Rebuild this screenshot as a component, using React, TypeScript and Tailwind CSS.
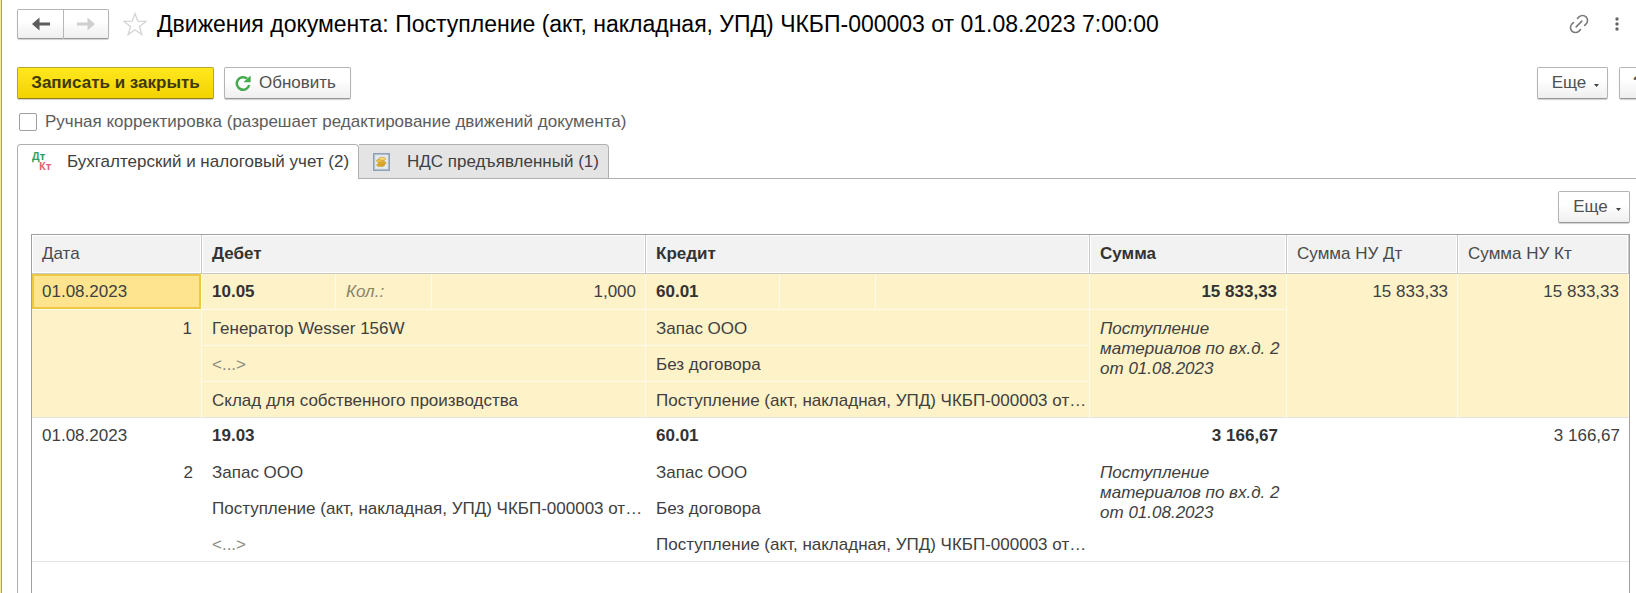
import type { ReactNode } from 'react';
import clsx from 'clsx';
import { Link2 } from 'lucide-react';

type Entry = {
  date: string;
  num: number;
  selected?: boolean;
  debit: string;
  qtyLabel?: string;
  qty?: string;
  debitLines: string[];
  credit: string;
  creditLines: string[];
  sum: string;
  note: string;
  sumDt: string;
  sumKt: string;
};

const RECEIPT = 'Поступление (акт, накладная, УПД) ЧКБП-000003 от…';
const NOTE = 'Поступление материалов по вх.д. 2 от 01.08.2023';

const entries: Entry[] = [
  {
    date: '01.08.2023',
    num: 1,
    selected: true,
    debit: '10.05',
    qtyLabel: 'Кол.:',
    qty: '1,000',
    debitLines: ['Генератор Wesser 156W', '<...>', 'Склад для собственного производства'],
    credit: '60.01',
    creditLines: ['Запас ООО', 'Без договора', RECEIPT],
    sum: '15 833,33',
    note: NOTE,
    sumDt: '15 833,33',
    sumKt: '15 833,33',
  },
  {
    date: '01.08.2023',
    num: 2,
    debit: '19.03',
    debitLines: ['Запас ООО', RECEIPT, '<...>'],
    credit: '60.01',
    creditLines: ['Запас ООО', 'Без договора', RECEIPT],
    sum: '3 166,67',
    note: NOTE,
    sumDt: '',
    sumKt: '3 166,67',
  },
];

const buttonStyle =
  'flex h-8 items-center justify-center rounded-xs border border-[#b4b4b4] border-b-[#989898] bg-linear-to-b from-white from-40% to-[#efefef] text-[#505050] shadow-[0_1px_1px_#d0d0d0]';

function ArrowIcon({ className }: { className?: string }) {
  return (
    <svg viewBox="0 0 18 14" className={clsx('h-[14px] w-[18px]', className)} aria-hidden="true">
      <path d="M0 7 7.5 .5V5.6H18V8.6H7.5V13.5Z" fill="currentColor" />
    </svg>
  );
}

function StarIcon() {
  return (
    <svg viewBox="0 0 24 24" className="size-6" fill="none" stroke="#d4d4d4" strokeWidth="1.3" aria-hidden="true">
      <path d="M12 1.5 14.8 9.2 23 9.4 16.5 14.4 18.8 22.6 12 17.8 5.2 22.6 7.5 14.4 1 9.4 9.2 9.2Z" />
    </svg>
  );
}

function RefreshIcon() {
  return (
    <svg viewBox="0 0 16 16" className="size-4" aria-hidden="true">
      <path d="M12 3.5A6.3 6.3 0 1 0 14.2 10" fill="none" stroke="#43ab4b" strokeWidth="2.5" />
      <path d="M15.6 .4V7.2H8.4Z" fill="#43ab4b" />
    </svg>
  );
}

function PostingIcon() {
  return (
    <svg viewBox="0 0 22 26" className="h-[26px] w-[22px] font-['Open_Sans',sans-serif] font-bold" aria-hidden="true">
      <text x="0" y="11" fontSize="10" fill="#2f9e62">Дт</text>
      <text x="7" y="21" fontSize="10" fill="#e2626a">Кт</text>
    </svg>
  );
}

function RegisterIcon() {
  return (
    <svg viewBox="0 0 17 18" className="h-[18px] w-[17px]" aria-hidden="true">
      <rect x=".75" y=".75" width="15.5" height="16.5" fill="#d5dde4" stroke="#8da1b4" strokeWidth="1.5" />
      <rect x="2.5" y="2.5" width="12" height="13" fill="#e8ebee" />
      <g fill="#e3ae2c" stroke="#b0841d" strokeWidth=".5">
        <ellipse cx="7.6" cy="12" rx="4" ry="1.6" />
        <ellipse cx="9.2" cy="10" rx="4" ry="1.6" />
        <ellipse cx="7.4" cy="7.8" rx="4" ry="1.6" fill="#f0c445" />
        <ellipse cx="9.2" cy="5.8" rx="3.6" ry="1.5" fill="#f8dc78" />
      </g>
    </svg>
  );
}

function MoreButton({ className }: { className?: string }) {
  return (
    <button type="button" className={clsx(buttonStyle, 'gap-2 pl-1.5', className)}>
      Еще
      <svg viewBox="0 0 5 3" className="mt-1 h-[3px] w-[5px]" aria-hidden="true">
        <path d="M0 0H5L2.5 3Z" fill="#404040" />
      </svg>
    </button>
  );
}

function HeadCell({ children, colSpan, bold }: { children: ReactNode; colSpan?: number; bold?: boolean }) {
  return (
    <th
      scope="col"
      colSpan={colSpan}
      className={clsx(
        'h-[39px] border-r border-b border-[#c8c8c8] bg-[#f2f2f2] px-2.5 text-left shadow-[inset_0_0_0_1px_#fff]',
        bold ? 'font-bold text-[#333]' : 'font-normal text-[#4a4a4a]',
      )}
    >
      {children}
    </th>
  );
}

function EntryRows({ entry }: { entry: Entry }) {
  const base = clsx('h-9 truncate border-b pl-2.5', entry.selected && 'border-r border-r-[#fffaeb]');
  const cell = clsx(base, entry.selected ? 'border-b-[#fffaeb]' : 'border-b-white');
  // cells that close the entry get a visible rule below
  const last = clsx(base, 'border-b-[#e3e3e3]');

  return (
    <tbody className={entry.selected ? 'bg-[#fdf2c8]' : 'bg-white'}>
      <tr>
        <td className={clsx(cell, entry.selected && 'bg-[#ffe48f] shadow-[inset_0_0_0_2px_#ecc843]')}>{entry.date}</td>
        <td className={clsx(cell, 'font-bold text-[#333]')}>{entry.debit}</td>
        <td className={clsx(cell, 'text-[#8a8468] italic')}>{entry.qtyLabel}</td>
        <td className={clsx(cell, 'pr-[9px] text-right')}>{entry.qty}</td>
        <td className={clsx(cell, 'font-bold text-[#333]')}>{entry.credit}</td>
        <td className={cell} />
        <td className={cell} />
        <td className={clsx(cell, 'pr-[9px] text-right font-bold text-[#333]')}>{entry.sum}</td>
        <td rowSpan={4} className={clsx(last, 'pt-2 pr-[9px] text-right align-top')}>{entry.sumDt}</td>
        <td rowSpan={4} className={clsx(last, 'pt-2 pr-[9px] text-right align-top')}>{entry.sumKt}</td>
      </tr>
      {entry.debitLines.map((line, i) => {
        const style = clsx(i === 2 ? last : cell, 'pt-0.5');
        return (
          <tr key={i}>
            {i === 0 && (
              <td rowSpan={3} className={clsx(last, 'pt-[9px] pr-[9px] text-right align-top')}>{entry.num}</td>
            )}
            <td colSpan={3} className={clsx(style, line === '<...>' && 'text-[#8a8a80]')}>{line}</td>
            <td colSpan={3} className={style}>{entry.creditLines[i]}</td>
            {i === 0 && (
              <td rowSpan={3} className={clsx(last, 'pt-[9px] pr-1 align-top whitespace-normal italic')}>{entry.note}</td>
            )}
          </tr>
        );
      })}
    </tbody>
  );
}

export default function App() {
  return (
    <div className="flex min-h-screen flex-col overflow-x-hidden border-l border-[#f3eba0] bg-white font-['Liberation_Sans',Arial,sans-serif] text-[17px] leading-5 text-[#404040]">
      <div className="flex flex-1 flex-col border-l border-[#a8a060] pt-[9px] pl-[15px]">
        <header className="flex h-[30px] items-center">
          <div className="flex">
            <button type="button" aria-label="Назад" className={clsx(buttonStyle, 'h-[30px] w-[47px] rounded-r-none')}>
              <ArrowIcon className="text-[#5c5c5c]" />
            </button>
            <button type="button" aria-label="Вперед" className={clsx(buttonStyle, 'h-[30px] w-[45px] rounded-l-none border-l-0')}>
              <ArrowIcon className="rotate-180 text-[#cfcfcf]" />
            </button>
          </div>
          <button type="button" aria-label="В избранное" className="ml-3.5">
            <StarIcon />
          </button>
          <h1 className="ml-2.5 text-[23px] whitespace-nowrap text-black">
            Движения документа: Поступление (акт, накладная, УПД) ЧКБП-000003 от 01.08.2023 7:00:00
          </h1>
          <div className="ml-auto flex items-center gap-6 pr-[17px] text-[#7a7a7a]">
            <button type="button" aria-label="Получить ссылку">
              <Link2 className="size-6 -rotate-45" strokeWidth={1.6} />
            </button>
            <button type="button" aria-label="Меню">
              <svg viewBox="0 0 4 14" className="h-[14px] w-1" fill="#666" aria-hidden="true">
                <circle cx="2" cy="2" r="1.7" />
                <circle cx="2" cy="7" r="1.7" />
                <circle cx="2" cy="12" r="1.7" />
              </svg>
            </button>
          </div>
        </header>

        <div className="mt-7 flex">
          <button
            type="button"
            className="h-8 w-[197px] rounded-xs border border-[#b8a52c] border-b-[#8f7f16] bg-linear-to-b from-[#ffe81c] to-[#f3d200] font-bold text-[#40390c] shadow-[0_1px_1px_#d0d0d0]"
          >
            Записать и закрыть
          </button>
          <button type="button" className={clsx(buttonStyle, 'ml-2.5 w-[127px] gap-2 pr-1')}>
            <RefreshIcon />
            Обновить
          </button>
          <MoreButton className="ml-auto w-[71px]" />
          {/* runs past the right edge of the window */}
          <button type="button" aria-label="Справка" className={clsx(buttonStyle, 'ml-[11px] -mr-[21px] w-[38px] shrink-0 font-bold')}>
            ?
          </button>
        </div>

        <label className="mt-[13px] flex h-5 items-center gap-2 pl-0.5 text-[#5c5c5c]">
          <input type="checkbox" className="size-[18px] appearance-none rounded-xs border border-[#a0a0a0] bg-white checked:bg-[#5c5c5c]" />
          Ручная корректировка (разрешает редактирование движений документа)
        </label>

        <div role="tablist" className="mt-3 flex h-[35px]">
          <button
            type="button"
            role="tab"
            aria-selected="true"
            className="flex w-[342px] items-center gap-[13px] rounded-t-sm border border-b-0 border-[#b0b0b0] bg-white pl-3.5"
          >
            <PostingIcon />
            Бухгалтерский и налоговый учет (2)
          </button>
          <button
            type="button"
            role="tab"
            aria-selected="false"
            className="flex w-[250px] items-center gap-[17px] rounded-tr-sm border border-l-0 border-[#b0b0b0] bg-[#e4e4e4] pl-3.5"
          >
            <RegisterIcon />
            НДС предъявленный (1)
          </button>
          <div className="flex-1 border-b border-[#b0b0b0]" />
        </div>

        <main role="tabpanel" className="flex flex-1 flex-col border-l border-[#b0b0b0] pt-3 pr-1.5 pl-[13px]">
          <MoreButton className="w-[72px] self-end" />
          <div className="mt-[11px] flex-1 border border-b-0 border-[#a0a0a0]">
            <table className="w-full table-fixed border-separate border-spacing-0">
              <colgroup>
                <col className="w-[170px]" />
                <col className="w-[134px]" />
                <col className="w-24" />
                <col className="w-[214px]" />
                <col className="w-[134px]" />
                <col className="w-24" />
                <col className="w-[214px]" />
                <col className="w-[197px]" />
                <col className="w-[171px]" />
                <col />
              </colgroup>
              <thead>
                <tr>
                  <HeadCell>Дата</HeadCell>
                  <HeadCell colSpan={3} bold>Дебет</HeadCell>
                  <HeadCell colSpan={3} bold>Кредит</HeadCell>
                  <HeadCell bold>Сумма</HeadCell>
                  <HeadCell>Сумма НУ Дт</HeadCell>
                  <HeadCell>Сумма НУ Кт</HeadCell>
                </tr>
              </thead>
              {entries.map((entry) => (
                <EntryRows key={entry.num} entry={entry} />
              ))}
            </table>
          </div>
        </main>
      </div>
    </div>
  );
}
